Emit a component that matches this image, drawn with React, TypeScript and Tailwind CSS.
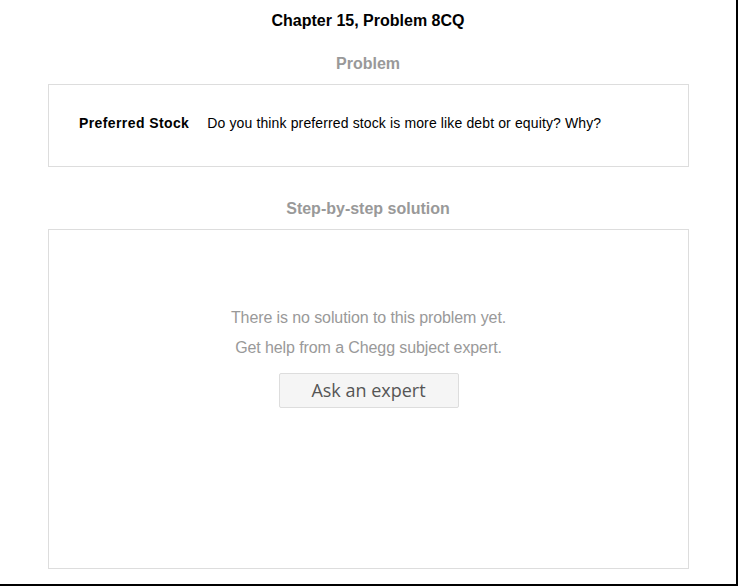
import React from "react";

export default function App() {
  const arial = { fontFamily: '"Liberation Sans", Arial, sans-serif' };
  return (
    <div
      className="w-[738px] h-[586px] bg-white border-r-2 border-b-2 border-black box-border flex flex-col items-center"
      style={arial}
    >
      <h1 className="mt-[12px] h-[18px] leading-[18px] text-[16px] font-bold text-black">
        Chapter 15, Problem 8CQ
      </h1>
      <h2 className="mt-[25px] h-[18px] leading-[18px] text-[16px] font-bold text-[#999999]">
        Problem
      </h2>
      <div className="mt-[11px] ml-[48px] mr-[47px] self-stretch h-[83px] border border-[#dddddd] bg-white flex items-center pl-[30px] pb-[5px]">
        <span className="text-[14px] font-bold text-black tracking-[0.4px]">Preferred Stock</span>
        <span className="ml-[18px] text-[14px] text-black tracking-[0.13px]">
          Do you think preferred stock is more like debt or equity? Why?
        </span>
      </div>
      <h2 className="mt-[33px] h-[18px] leading-[18px] text-[16px] font-bold text-[#999999]">
        Step-by-step solution
      </h2>
      <div className="mt-[11px] ml-[48px] mr-[47px] self-stretch h-[340px] border border-[#dddddd] bg-white flex flex-col items-center">
        <p className="mt-[78px] h-[20px] leading-[20px] text-[16px] text-[#999999] tracking-[-0.1px]">
          There is no solution to this problem yet.
        </p>
        <p className="mt-[10px] h-[20px] leading-[20px] text-[16px] text-[#999999] tracking-[-0.1px]">
          Get help from a Chegg subject expert.
        </p>
        <button
          className="mt-[15px] w-[180px] h-[35px] bg-[#f5f5f5] border border-[#dddddd] rounded-[2px] text-[18px] text-[#555555] flex items-center justify-center"
          style={{ fontFamily: '"Open Sans", "DejaVu Sans", sans-serif' }}
        >
          Ask an expert
        </button>
      </div>
    </div>
  );
}
